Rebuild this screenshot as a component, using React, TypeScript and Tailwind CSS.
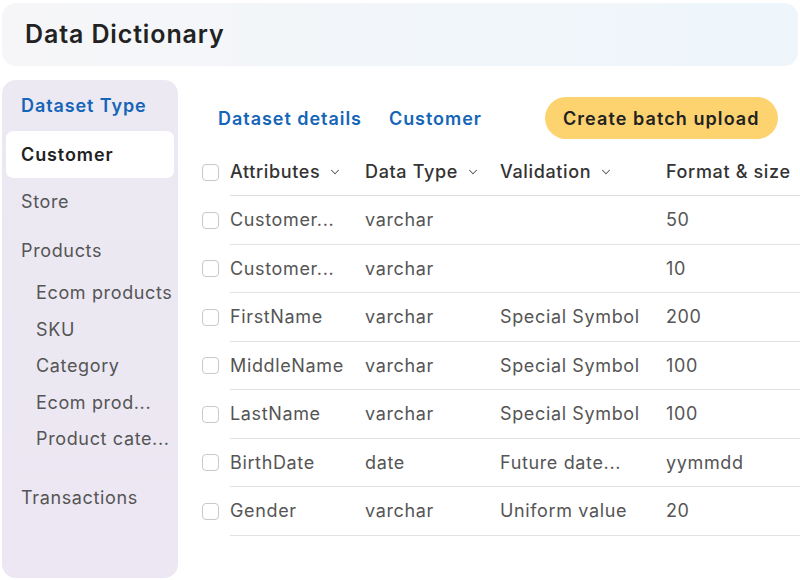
import { ChevronDown } from "lucide-react"

interface Row {
  name: string
  type: string
  validation: string
  size: string
}

const rows: Row[] = [
  { name: "Customer...", type: "varchar", validation: "", size: "50" },
  { name: "Customer...", type: "varchar", validation: "", size: "10" },
  { name: "FirstName", type: "varchar", validation: "Special Symbol", size: "200" },
  { name: "MiddleName", type: "varchar", validation: "Special Symbol", size: "100" },
  { name: "LastName", type: "varchar", validation: "Special Symbol", size: "100" },
  { name: "BirthDate", type: "date", validation: "Future date...", size: "yymmdd" },
  { name: "Gender", type: "varchar", validation: "Uniform value", size: "20" },
]

const Checkbox = () => (
  <div className="w-[17px] h-[17px] rounded-[4px] border-[1.5px] border-[#c9c9c9] bg-white" />
)

export default function App() {
  return (
    <div
      className="w-[800px] h-[580px] overflow-hidden bg-white text-[#222] tracking-[0.04em]"
      style={{ fontFamily: "Inter, 'Open Sans', sans-serif" }}
    >
      {/* Title bar */}
      <div className="mx-[2px] mt-[3px] h-[63px] rounded-[14px] bg-gradient-to-r from-[#f6f6f8] to-[#eef6fb] flex items-center px-[23px]">
        <h1 className="text-[25px] font-semibold text-[#222] tracking-[0.035em]">Data Dictionary</h1>
      </div>

      <div className="flex mt-[14px]">
        {/* Sidebar */}
        <aside className="ml-[2px] w-[176px] h-[498px] shrink-0 rounded-[14px] bg-gradient-to-b from-[#ece9f3] to-[#ece7f2] px-[4px] pt-[13px]">
          <div className="px-[15px] text-[18px] font-semibold text-[#1565b8] h-[26px] leading-[26px] whitespace-nowrap tracking-[0.05em]">Dataset Type</div>
          <div className="mt-[12px] h-[47px] rounded-[7px] bg-white flex items-center px-[15px] text-[18px] font-semibold text-[#222] tracking-[0.05em]">
            Customer
          </div>
          <div className="px-[15px] text-[18px] text-[#555] mt-[12px] leading-[24px]">Store</div>
          <div className="px-[15px] text-[18px] text-[#555] mt-[25px] leading-[24px]">Products</div>
          <div className="pl-[30px] text-[18px] text-[#555] leading-[24px] flex flex-col gap-[12.5px] mt-[18px]">
            <span className="whitespace-nowrap">Ecom products</span>
            <span>SKU</span>
            <span>Category</span>
            <span className="whitespace-nowrap">Ecom prod...</span>
            <span className="whitespace-nowrap">Product cate...</span>
          </div>
          <div className="px-[15px] text-[18px] text-[#555] mt-[35px] leading-[24px]">Transactions</div>
        </aside>

        {/* Main */}
        <main className="flex-1 pl-[24px] pt-[17px] overflow-hidden">
          <div className="flex items-center h-[42px] pl-[16px] tracking-[0.06em]">
            <span className="text-[18px] font-semibold text-[#1565b8] whitespace-nowrap">Dataset details</span>
            <span className="ml-[27px] text-[18px] font-semibold text-[#1565b8]">Customer</span>
            <button className="ml-[63px] h-[42px] px-[18px] rounded-full bg-[#fdd36f] text-[18px] font-semibold text-[#222] whitespace-nowrap tracking-[0.06em]">
              Create batch upload
            </button>
          </div>

          <div className="mt-[9px] w-[620px]">
            <div className="flex items-center h-[48px]">
              <div className="w-[28px] shrink-0"><Checkbox /></div>
              <div className="flex flex-1 h-full items-center border-b border-[#dedede] text-[18px] font-medium text-[#333]">
                <div className="w-[135px] flex items-center gap-[8px]">Attributes <ChevronDown size={14} strokeWidth={1.8} className="text-[#555]" /></div>
                <div className="w-[135px] flex items-center gap-[8px]">Data Type <ChevronDown size={14} strokeWidth={1.8} className="text-[#555]" /></div>
                <div className="w-[166px] flex items-center gap-[8px]">Validation <ChevronDown size={14} strokeWidth={1.8} className="text-[#555]" /></div>
                <div className="flex items-center gap-[8px] whitespace-nowrap">Format &amp; size <ChevronDown size={14} strokeWidth={1.8} className="text-[#555]" /></div>
              </div>
            </div>
            {rows.map((r, i) => (
              <div key={i} className="flex items-center h-[48.5px]">
                <div className="w-[28px] shrink-0"><Checkbox /></div>
                <div className="flex flex-1 h-full items-center border-b border-[#e2e2e2] text-[18px] text-[#555]">
                  <div className="w-[135px] whitespace-nowrap">{r.name}</div>
                  <div className="w-[135px]">{r.type}</div>
                  <div className="w-[166px] whitespace-nowrap">{r.validation}</div>
                  <div>{r.size}</div>
                </div>
              </div>
            ))}
          </div>
        </main>
      </div>
    </div>
  )
}
